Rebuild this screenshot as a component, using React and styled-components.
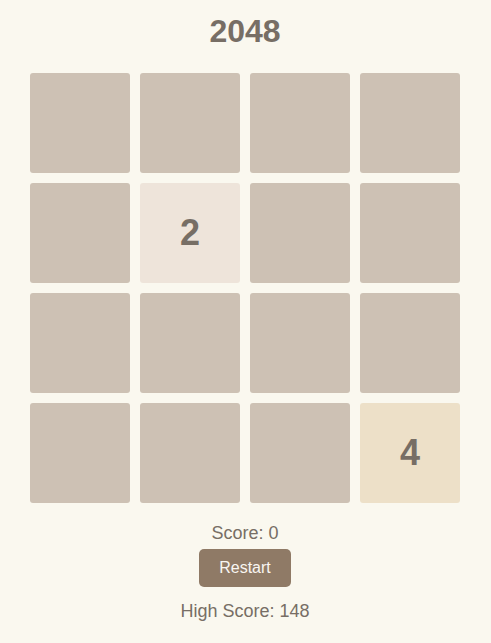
import styled, { createGlobalStyle } from "styled-components";

const board = [
  [0, 0, 0, 0],
  [0, 2, 0, 0],
  [0, 0, 0, 0],
  [0, 0, 0, 4],
];

const tileColors = {
  0: "#cdc1b4",
  2: "#eee4da",
  4: "#ede0c8",
};

const GlobalStyle = createGlobalStyle`
  body {
    margin: 0;
    background: #faf8ef;
    font-family: "Liberation Sans", Arial, sans-serif;
    color: #776e65;
  }
`;

const Page = styled.div`
  display: flex;
  flex-direction: column;
  align-items: center;
  padding: 13px 1px 0 0;
`;

const Title = styled.h1`
  margin: 0 0 23px;
  font-size: 32px;
  line-height: 37px;
  font-weight: bold;
`;

const Board = styled.div`
  display: grid;
  grid-template-columns: repeat(4, 100px);
  grid-auto-rows: 100px;
  gap: 10px;
`;

const Tile = styled.div`
  background: ${(p) => tileColors[p.value] || "#cdc1b4"};
  border-radius: 3px;
  display: flex;
  align-items: center;
  justify-content: center;
  font-size: 36px;
  font-weight: bold;
  color: #776e65;
`;

const Score = styled.div`
  margin-top: 20px;
  font-size: 18px;
  line-height: 21px;
`;

const RestartButton = styled.button`
  margin-top: 5px;
  width: 92px;
  height: 38px;
  border: none;
  border-radius: 5px;
  background: #8f7a66;
  color: #f9f6f2;
  font-family: "Liberation Sans", Arial, sans-serif;
  font-size: 16px;
  cursor: pointer;
`;

const HighScore = styled.div`
  margin-top: 14px;
  font-size: 18px;
  line-height: 21px;
`;

const App = () => {
  return (
    <>
      <GlobalStyle />
      <Page>
        <Title>2048</Title>
        <Board>
          {board.flat().map((v, i) => (
            <Tile key={i} value={v}>
              {v ? v : ""}
            </Tile>
          ))}
        </Board>
        <Score>Score: 0</Score>
        <RestartButton>Restart</RestartButton>
        <HighScore>High Score: 148</HighScore>
      </Page>
    </>
  );
};

export default App;
